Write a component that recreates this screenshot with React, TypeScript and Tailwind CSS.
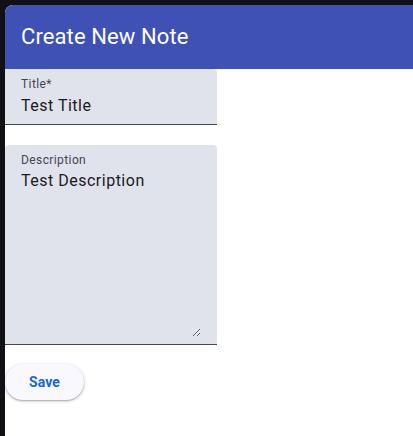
import React from "react";

export default function App() {
  return (
    <div className="w-[413px] h-[436px] bg-[#111014] pl-[5px] pt-[5px] overflow-hidden" style={{ fontFamily: "Roboto, 'Noto Sans', sans-serif" }}>
      <div className="w-full h-full bg-white rounded-tl-[8px] overflow-hidden flex flex-col">
        <div className="h-[64px] bg-[#3f51b5] flex items-center pl-[16px] shrink-0">
          <h1 className="text-white text-[22px] leading-none font-normal tracking-[0.1px]">Create New Note</h1>
        </div>
        <div className="flex flex-col w-[212px]">
          <div className="bg-[#e0e2ec] rounded-tr-[4px] border-b border-[#44474e] pl-[16px] pr-[16px] pt-[7px] pb-[6px]">
            <div className="text-[12px] leading-[16px] text-[#44474e] tracking-[0.4px]">Title*</div>
            <div className="text-[16px] leading-[24px] text-[#1a1b1f] tracking-[0.5px] mt-[2px]">Test Title</div>
          </div>
          <div className="mt-[20px] bg-[#e0e2ec] rounded-t-[4px] border-b border-[#44474e] h-[200px] flex flex-col pl-[16px] pr-[16px] pt-[7px] pb-[7px]">
            <div className="text-[12px] leading-[16px] text-[#44474e] tracking-[0.4px]">Description</div>
            <textarea
              defaultValue="Test Description"
              className="flex-1 bg-transparent outline-none resize-y text-[16px] leading-[24px] text-[#1a1b1f] tracking-[0.5px] p-0 mt-[1px]"
              style={{ fontFamily: "Roboto, 'Noto Sans', sans-serif" }}
            />
          </div>
          <div className="mt-[19px]">
            <button className="w-[79px] h-[36px] rounded-full bg-[#f8f8fe] text-[#1565d8] text-[14px] font-bold tracking-[0.1px] shadow-[0_1px_3px_rgba(0,0,0,0.3),0_1px_1px_rgba(0,0,0,0.12)]">
              Save
            </button>
          </div>
        </div>
      </div>
    </div>
  );
}
